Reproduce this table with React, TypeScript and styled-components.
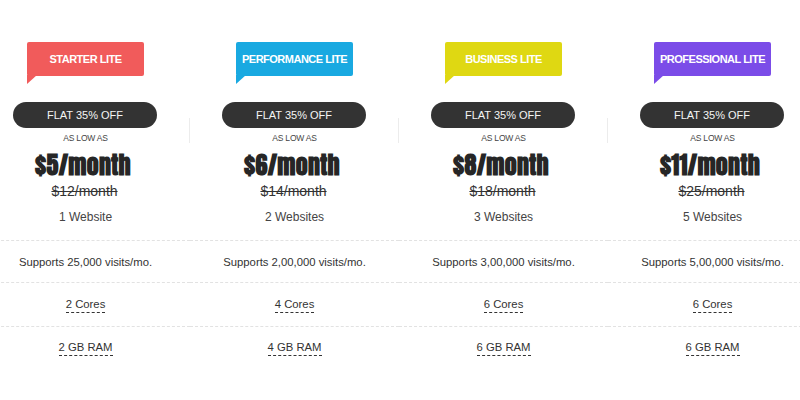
import React from "react";
import styled, { createGlobalStyle } from "styled-components";

const Global = createGlobalStyle`
  html, body { margin: 0; padding: 0; background: #fff; overflow: hidden; }
  body { font-family: "Liberation Sans", Arial, sans-serif; color: #333; }
`;

const Page = styled.div`
  width: 800px;
  height: 400px;
  overflow: hidden;
  position: relative;
`;

const Grid = styled.div`
  display: grid;
  grid-template-columns: repeat(4, 209px);
  margin-left: -19px;
  width: 836px;
  padding-top: 42px;
`;

const Column = styled.div<{ $last?: boolean }>`
  display: flex;
  flex-direction: column;
  align-items: center;
  position: relative;
  &::after {
    content: "";
    display: ${(p) => (p.$last ? "none" : "block")};
    position: absolute;
    right: 0;
    top: 76px;
    width: 1px;
    height: 25px;
    background: #ececec;
  }
`;

const Head = styled.div`
  width: 100%;
  display: flex;
  flex-direction: column;
  align-items: center;
`;

const TagRow = styled.div`
  width: 100%;
  padding-left: 46px;
  box-sizing: border-box;
  height: 60px;
`;

const Tag = styled.div<{ $color: string }>`
  position: relative;
  width: 117px;
  height: 34px;
  border-radius: 2px;
  background: ${(p) => p.$color};
  color: #fff;
  font-weight: 700;
  font-size: 11px;
  letter-spacing: -0.5px;
  display: flex;
  align-items: center;
  justify-content: center;
  &::after {
    content: "";
    position: absolute;
    left: 0;
    top: 33px;
    border-top: 9px solid ${(p) => p.$color};
    border-right: 10px solid transparent;
  }
`;

const Pill = styled.div`
  width: 144px;
  height: 26px;
  border-radius: 13px;
  background: #333333;
  color: #f5f5f5;
  font-size: 11px;
  display: flex;
  align-items: center;
  justify-content: center;
  margin-left: -1px;
`;

const LowAs = styled.div`
  font-size: 8.5px;
  letter-spacing: -0.2px;
  color: #444;
  margin-top: 4px;
  line-height: 12px;
`;

const Price = styled.div`
  font-family: Impact, "Anton", "Liberation Sans Narrow", "DejaVu Sans Condensed", sans-serif;
  font-weight: 700;
  font-size: 24px;
  color: #262626;
  line-height: 26px;
  margin-top: 8px;
  margin-left: -5px;
  letter-spacing: 0.2px;
`;

const OldPrice = styled.div`
  font-size: 14px;
  color: #333;
  text-decoration: line-through;
  line-height: 18px;
  margin-top: 4px;
  margin-left: -2px;
`;

const Sites = styled.div`
  font-size: 12px;
  color: #444;
  line-height: 16px;
  margin-top: 9px;
  height: 31px;
`;

const Row = styled.div<{ $h?: number }>`
  width: 100%;
  height: ${(p) => p.$h ?? 43}px;
  border-top: 1px dashed #e2e2e2;
  display: flex;
  align-items: center;
  justify-content: center;
  font-size: 11.3px;
  color: #333;
  box-sizing: border-box;
`;

const Dotted = styled.span`
  border-bottom: 1px dashed #333;
  padding-bottom: 1px;
  line-height: 14px;
`;

const plans = [
  { name: "STARTER LITE", color: "#f15b5b", price: "$5/month", old: "$12/month", sites: "1 Website", visits: "25,000", cores: "2 Cores", ram: "2 GB RAM" },
  { name: "PERFORMANCE LITE", color: "#19a9e1", price: "$6/month", old: "$14/month", sites: "2 Websites", visits: "2,00,000", cores: "4 Cores", ram: "4 GB RAM" },
  { name: "BUSINESS LITE", color: "#dfd812", price: "$8/month", old: "$18/month", sites: "3 Websites", visits: "3,00,000", cores: "6 Cores", ram: "6 GB RAM" },
  { name: "PROFESSIONAL LITE", color: "#7b4ce8", price: "$11/month", old: "$25/month", sites: "5 Websites", visits: "5,00,000", cores: "6 Cores", ram: "6 GB RAM" },
];

export default function App() {
  return (
    <Page>
      <Global />
      <Grid>
        {plans.map((p, i) => (
          <Column key={p.name} $last={i === plans.length - 1}>
            <Head>
              <TagRow>
                <Tag $color={p.color}>{p.name}</Tag>
              </TagRow>
              <Pill>FLAT 35% OFF</Pill>
              <LowAs>AS LOW AS</LowAs>
              <Price>{p.price}</Price>
              <OldPrice>{p.old}</OldPrice>
              <Sites>{p.sites}</Sites>
            </Head>
            <Row $h={42}>Supports {p.visits} visits/mo.</Row>
            <Row $h={44}><Dotted>{p.cores}</Dotted></Row>
            <Row><Dotted>{p.ram}</Dotted></Row>
          </Column>
        ))}
      </Grid>
    </Page>
  );
}
